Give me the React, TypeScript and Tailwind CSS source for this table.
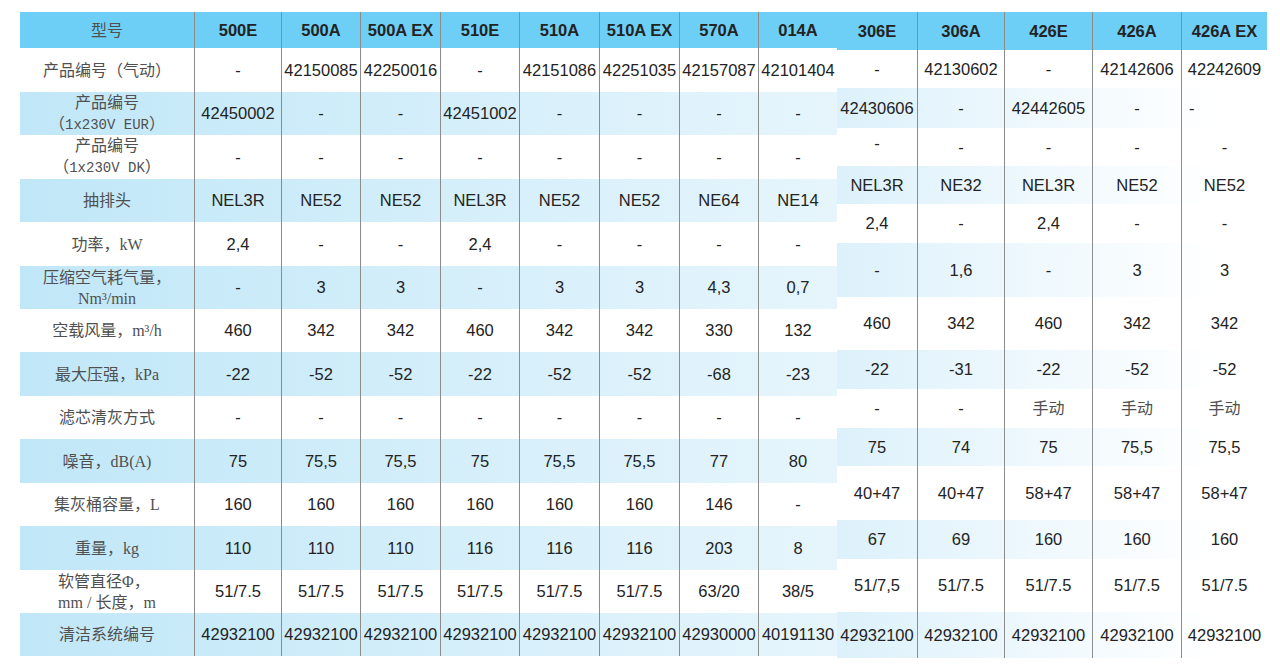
import React from 'react';

type Cell = string | { text: string; align?: 'left' | 'top'; cjk?: boolean };

const leftCols = ['500E', '500A', '500A EX', '510E', '510A', '510A EX', '570A', '014A'];
const leftWidths = ['w-[87px]', 'w-[79px]', 'w-[80px]', 'w-[79px]', 'w-[80px]', 'w-[80px]', 'w-[79px]', 'w-[79px]'];
const leftHeights = [
  'h-[44px]', 'h-[43px]', 'h-[44px]', 'h-[43px]', 'h-[44px]', 'h-[43px]', 'h-[43px]',
  'h-[44px]', 'h-[43px]', 'h-[44px]', 'h-[43px]', 'h-[44px]', 'h-[43px]', 'h-[43px]',
];

const rightCols = ['306E', '306A', '426E', '426A', '426A EX'];
const rightWidths = ['w-[80px]', 'w-[87px]', 'w-[88px]', 'w-[89px]', 'w-[86px]'];
const rightHeights = [
  'h-[38px]', 'h-[40px]', 'h-[38px]', 'h-[38px]', 'h-[39px]', 'h-[54px]', 'h-[53px]',
  'h-[39px]', 'h-[39px]', 'h-[38px]', 'h-[54px]', 'h-[39px]', 'h-[53px]', 'h-[46px]',
];

const mono = "font-['Liberation_Mono',monospace] text-[14px]";

// labels of the left table, some on two lines
const labels: React.ReactNode[] = [
  '产品编号（气动）',
  <>产品编号<br />（<span className={mono}>1x230V EUR</span>）</>,
  <>产品编号<br />（<span className={mono}>1x230V DK</span>）</>,
  '抽排头',
  '功率，kW',
  <>压缩空气耗气量，<br />Nm³/min</>,
  '空载风量，m³/h',
  '最大压强，kPa',
  '滤芯清灰方式',
  '噪音，dB(A)',
  '集灰桶容量，L',
  '重量，kg',
  <span className="inline-block text-left">软管直径Φ，<br />mm / 长度，m</span>,
  '清洁系统编号',
];

const leftRows: Cell[][] = [
  ['-', '42150085', '42250016', '-', '42151086', '42251035', '42157087', '42101404'],
  ['42450002', '-', '-', '42451002', '-', '-', '-', '-'],
  ['-', '-', '-', '-', '-', '-', '-', '-'],
  ['NEL3R', 'NE52', 'NE52', 'NEL3R', 'NE52', 'NE52', 'NE64', 'NE14'],
  ['2,4', '-', '-', '2,4', '-', '-', '-', '-'],
  ['-', '3', '3', '-', '3', '3', '4,3', '0,7'],
  ['460', '342', '342', '460', '342', '342', '330', '132'],
  ['-22', '-52', '-52', '-22', '-52', '-52', '-68', '-23'],
  ['-', '-', '-', '-', '-', '-', '-', '-'],
  ['75', '75,5', '75,5', '75', '75,5', '75,5', '77', '80'],
  ['160', '160', '160', '160', '160', '160', '146', '-'],
  ['110', '110', '110', '116', '116', '116', '203', '8'],
  ['51/7.5', '51/7.5', '51/7.5', '51/7.5', '51/7.5', '51/7.5', '63/20', '38/5'],
  ['42932100', '42932100', '42932100', '42932100', '42932100', '42932100', '42930000', '40191130'],
];

const manual: Cell = { text: '手动', cjk: true };

const rightRows: Cell[][] = [
  ['-', '42130602', '-', '42142606', '42242609'],
  ['42430606', '-', '42442605', '-', { text: '-', align: 'left' }],
  [{ text: '-', align: 'top' }, '-', '-', '-', '-'],
  ['NEL3R', 'NE32', 'NEL3R', 'NE52', 'NE52'],
  ['2,4', '-', '2,4', '-', '-'],
  ['-', '1,6', '-', '3', '3'],
  ['460', '342', '460', '342', '342'],
  ['-22', '-31', '-22', '-52', '-52'],
  ['-', '-', manual, manual, manual],
  ['75', '74', '75', '75,5', '75,5'],
  ['40+47', '40+47', '58+47', '58+47', '58+47'],
  ['67', '69', '160', '160', '160'],
  ['51/7,5', '51/7.5', '51/7.5', '51/7.5', '51/7.5'],
  ['42932100', '42932100', '42932100', '42932100', '42932100'],
];

const labelFont = "font-['Liberation_Serif','Noto_Sans_CJK_SC',serif] text-[16px] leading-[21px] text-[#505050]";
const dataFont = "font-['Liberation_Sans',Arial,sans-serif] text-[16.5px] text-[#232323]";
const line = 'border-l border-[#8c8c8c]';

function ValueCell({ cell, width, border }: { cell: Cell; width: string; border: boolean }) {
  const c = typeof cell === 'string' ? { text: cell } : cell;
  let place = 'items-center justify-center';
  if (c.align === 'left') place = 'items-center justify-start pl-[7px]';
  if (c.align === 'top') place = 'items-start justify-center pt-[3px]';
  return (
    <div className={`${width} shrink-0 h-full flex ${place} ${border ? line : ''} ${c.cjk ? labelFont : dataFont}`}>
      {c.text}
    </div>
  );
}

function LeftTable() {
  return (
    <div className="w-[817px] shrink-0 flex flex-col">
      <div className="h-[36px] flex bg-[#6dcff6]">
        <div className={`w-[174px] shrink-0 flex items-center justify-center ${labelFont}`}>型号</div>
        {leftCols.map((name, i) => (
          <div
            key={name}
            className={`${leftWidths[i]} shrink-0 flex items-center justify-center font-bold ${line} ${dataFont}`}
          >
            {name}
          </div>
        ))}
      </div>
      {leftRows.map((row, r) => (
        <div
          key={r}
          className={`${leftHeights[r]} flex ${r % 2 === 1 ? 'bg-linear-to-r from-[#c0e7f8] to-[#e6f5fc]' : 'bg-white'}`}
        >
          <div className={`w-[174px] shrink-0 flex items-center justify-center text-center ${labelFont}`}>
            <div>{labels[r]}</div>
          </div>
          {row.map((cell, i) => (
            <ValueCell key={i} cell={cell} width={leftWidths[i]} border />
          ))}
        </div>
      ))}
    </div>
  );
}

function RightTable() {
  return (
    <div className="w-[430px] shrink-0 flex flex-col">
      <div className="h-[38px] flex bg-[#6dcff6]">
        {rightCols.map((name, i) => (
          <div
            key={name}
            className={`${rightWidths[i]} shrink-0 flex items-center justify-center font-bold ${i > 0 ? line : ''} ${dataFont}`}
          >
            {name}
          </div>
        ))}
      </div>
      {rightRows.map((row, r) => (
        <div
          key={r}
          className={`${rightHeights[r]} flex ${r % 2 === 1 ? 'bg-linear-to-r from-[#dcf1fb] to-white to-[88%]' : 'bg-white'}`}
        >
          {row.map((cell, i) => (
            <ValueCell key={i} cell={cell} width={rightWidths[i]} border={i > 0} />
          ))}
        </div>
      ))}
    </div>
  );
}

export default function App() {
  return (
    <div className="w-[1280px] h-[668px] bg-white pt-[12px] pl-[20px] flex items-start overflow-hidden">
      <LeftTable />
      <RightTable />
    </div>
  );
}
